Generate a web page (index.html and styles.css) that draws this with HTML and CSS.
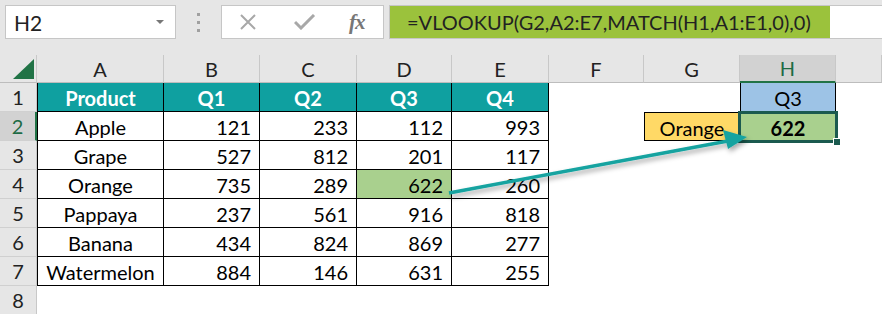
FILE: index.html
```html
<!DOCTYPE html>
<html>
<head>
<meta charset="utf-8">
<link rel="stylesheet" href="styles.css">
</head>
<body>
<div class="page">
  <div class="topbar">
    <div class="namebox"><span>H2</span><span class="dd"></span></div>
    <div class="dots"><i></i><i></i><i></i></div>
    <div class="fbtns">
      <svg class="ico" width="20" height="16" viewBox="0 0 20 16"><path d="M2 1 L16 15 M16 1 L2 15" stroke="#a8a8a8" stroke-width="2" fill="none"/></svg>
      <svg class="ico" width="22" height="16" viewBox="0 0 22 16"><path d="M1 8 L7 14 L20 1" stroke="#a8a8a8" stroke-width="3" fill="none"/></svg>
      <span class="fx">fx</span>
    </div>
    <div class="formula"><span class="fsel">=VLOOKUP(G2,A2:E7,MATCH(H1,A1:E1,0),0)</span></div>
  </div>
  <div class="grid">
    <div class="corner"><svg width="37" height="28" viewBox="0 0 37 28"><polygon points="13,24 34,4 34,24" fill="#217346"/></svg></div>
    <div class="ch">A</div><div class="ch">B</div><div class="ch">C</div><div class="ch">D</div><div class="ch">E</div><div class="ch">F</div><div class="ch">G</div><div class="ch sel">H</div><div class="ch"></div>

    <div class="rh">1</div>
    <div class="c t th first">Product</div><div class="c t th">Q1</div><div class="c t th">Q2</div><div class="c t th">Q3</div><div class="c t th">Q4</div>
    <div class="c"></div><div class="c"></div><div class="c blue">Q3</div><div class="c"></div>

    <div class="rh sel">2</div>
    <div class="c t first ctr">Apple</div><div class="c t num">121</div><div class="c t num">233</div><div class="c t num">112</div><div class="c t num">993</div>
    <div class="c"></div><div class="c yellow">Orange</div><div class="c green active"><b>622</b><span class="selbox"><span class="handle"></span></span></div><div class="c"></div>

    <div class="rh">3</div>
    <div class="c t first ctr">Grape</div><div class="c t num">527</div><div class="c t num">812</div><div class="c t num">201</div><div class="c t num">117</div>
    <div class="c"></div><div class="c"></div><div class="c"></div><div class="c"></div>

    <div class="rh">4</div>
    <div class="c t first ctr">Orange</div><div class="c t num">735</div><div class="c t num">289</div><div class="c t num hl">622</div><div class="c t num">260</div>
    <div class="c"></div><div class="c"></div><div class="c"></div><div class="c"></div>

    <div class="rh">5</div>
    <div class="c t first ctr">Pappaya</div><div class="c t num">237</div><div class="c t num">561</div><div class="c t num">916</div><div class="c t num">818</div>
    <div class="c"></div><div class="c"></div><div class="c"></div><div class="c"></div>

    <div class="rh">6</div>
    <div class="c t first ctr">Banana</div><div class="c t num">434</div><div class="c t num">824</div><div class="c t num">869</div><div class="c t num">277</div>
    <div class="c"></div><div class="c"></div><div class="c"></div><div class="c"></div>

    <div class="rh">7</div>
    <div class="c t first ctr">Watermelon</div><div class="c t num">884</div><div class="c t num">146</div><div class="c t num">631</div><div class="c t num">255</div>
    <div class="c"></div><div class="c"></div><div class="c"></div><div class="c"></div>

    <div class="rh">8</div>
    <div class="c"></div><div class="c"></div><div class="c"></div><div class="c"></div><div class="c"></div>
    <div class="c"></div><div class="c"></div><div class="c"></div><div class="c"></div>
  </div>
  <svg class="arrow" width="882" height="314" viewBox="0 0 882 314">
    <defs>
      <filter id="sh" x="-10%" y="-50%" width="120%" height="200%">
        <feDropShadow dx="2" dy="3" stdDeviation="2.5" flood-color="#000" flood-opacity="0.35"/>
      </filter>
    </defs>
    <g filter="url(#sh)">
      <line x1="449" y1="193" x2="728" y2="141" stroke="#14a3a0" stroke-width="3.5"/>
      <polygon points="747,137 723,130 728,149" fill="#14a3a0"/>
    </g>
  </svg>
</div>
</body>
</html>
```

FILE: styles.css
```css
* { box-sizing: border-box; }
html, body { margin: 0; padding: 0; }
body { background: #fff; }
.page {
  position: relative;
  width: 882px;
  height: 314px;
  overflow: hidden;
  font-family: Lato, "Open Sans", sans-serif;
  color: #000;
}
.topbar {
  height: 55px;
  background: #e6e6e6;
  display: flex;
  align-items: flex-start;
  padding: 5px 0 0 5px;
}
.namebox {
  width: 171px;
  height: 34px;
  background: #fff;
  border: 1px solid #c6c6c6;
  display: flex;
  align-items: center;
  justify-content: space-between;
  padding: 0 11px 0 8px;
  font-size: 21px;
  color: #222;
}
.dd {
  width: 0; height: 0;
  border-left: 4px solid transparent;
  border-right: 4px solid transparent;
  border-top: 4px solid #777;
}
.dots {
  width: 45px;
  height: 34px;
  display: flex;
  flex-direction: column;
  align-items: center;
  justify-content: center;
  gap: 5px;
}
.dots i { display: block; width: 3px; height: 3px; background: #a0a0a0; }
.fbtns {
  width: 163px;
  height: 34px;
  background: #fff;
  border: 1px solid #c6c6c6;
  display: flex;
  align-items: center;
  padding-left: 17px;
  gap: 0;
}
.fbtns .ico:first-child { margin-right: 35px; }
.fbtns .ico:nth-child(2) { margin-right: 33px; }
.fx {
  font-family: "Liberation Serif", serif;
  font-style: italic;
  font-weight: bold;
  font-size: 21px;
  color: #777;
  letter-spacing: -1px;
}
.formula {
  flex: 1;
  height: 34px;
  margin-left: 5px;
  background: #fff;
  border-top: 1px solid #c6c6c6;
  border-bottom: 1px solid #c6c6c6;
  border-left: 1px solid #c6c6c6;
  display: flex;
}
.fsel {
  width: 440px;
  height: 100%;
  background: #9bc23c;
  display: flex;
  align-items: center;
  padding-left: 17px;
  font-size: 20px;
  color: #222;
  white-space: nowrap;
}
.grid {
  display: grid;
  grid-template-columns: 37px 127px 96px 97px 95px 97px 95px 96px 96px 1fr;
  grid-template-rows: 28px repeat(8, 29px);
  font-size: 20px;
}
.corner, .ch {
  background: #e6e6e6;
  border-bottom: 1px solid #bdbdbd;
}
.corner { border-right: 1px solid #c8c8c8; }
.corner svg { display: block; }
.ch {
  border-right: 1px solid #c8c8c8;
  display: flex;
  align-items: center;
  justify-content: center;
  color: #222;
}
.ch.sel {
  background: #d2d2d2;
  color: #1e6b45;
  border-bottom: 2px solid #217346;
}
.rh {
  background: #e6e6e6;
  border-right: 1px solid #c8c8c8;
  border-bottom: 1px solid #d0d0d0;
  display: flex;
  align-items: center;
  justify-content: center;
  color: #222;
}
.rh.sel {
  background: #d2d2d2;
  color: #1e6b45;
  border-right: 2px solid #217346;
}
.c {
  display: flex;
  align-items: center;
  padding-top: 2px;
  white-space: nowrap;
}
.t {
  border-right: 1px solid #000;
  border-bottom: 1px solid #000;
}
.first { border-left: 1px solid #000; }
.th {
  background: #0fa0a0;
  color: #fff;
  font-weight: bold;
  justify-content: center;
}
.ctr { justify-content: center; }
.num { justify-content: flex-end; padding-right: 8px; }
.hl { background: #a9d08e; }
.blue {
  background: #9dc3e6;
  justify-content: center;
  border: 1px solid #000;
  border-top: none;
}
.yellow {
  background: #ffd966;
  justify-content: center;
  border: 1px solid #000;
}
.green {
  background: #a9d08e;
  justify-content: center;
}
.active { position: relative; }
.selbox {
  position: absolute;
  left: -2px; top: -1px; right: -2px; bottom: -2px;
  border: 3px solid #1b5a4f;
}
.handle {
  position: absolute;
  right: -5px; bottom: -5px;
  width: 7px; height: 7px;
  background: #1b5a4f;
  border-left: 1px solid #fff;
  border-top: 1px solid #fff;
}
.arrow {
  position: absolute;
  left: 0; top: 0;
  pointer-events: none;
}
```
